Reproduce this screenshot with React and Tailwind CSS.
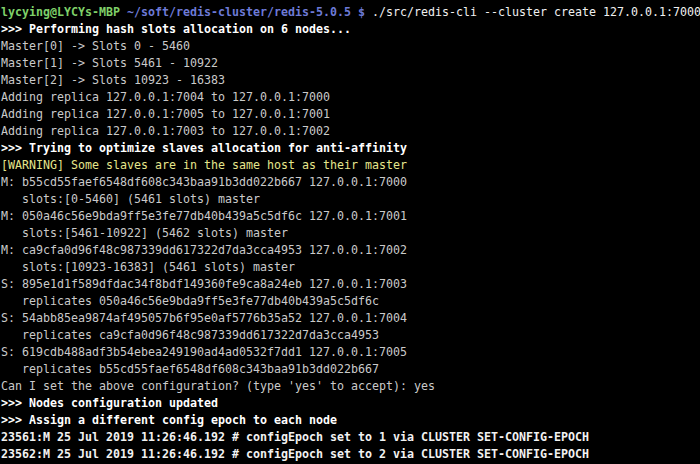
const lines = [
  { t: ">>> Performing hash slots allocation on 6 nodes...", c: "bold" },
  { t: "Master[0] -> Slots 0 - 5460" },
  { t: "Master[1] -> Slots 5461 - 10922" },
  { t: "Master[2] -> Slots 10923 - 16383" },
  { t: "Adding replica 127.0.0.1:7004 to 127.0.0.1:7000" },
  { t: "Adding replica 127.0.0.1:7005 to 127.0.0.1:7001" },
  { t: "Adding replica 127.0.0.1:7003 to 127.0.0.1:7002" },
  { t: ">>> Trying to optimize slaves allocation for anti-affinity", c: "bold" },
  { t: "[WARNING] Some slaves are in the same host as their master", c: "warn" },
  { t: "M: b55cd55faef6548df608c343baa91b3dd022b667 127.0.0.1:7000" },
  { t: "   slots:[0-5460] (5461 slots) master" },
  { t: "M: 050a46c56e9bda9ff5e3fe77db40b439a5c5df6c 127.0.0.1:7001" },
  { t: "   slots:[5461-10922] (5462 slots) master" },
  { t: "M: ca9cfa0d96f48c987339dd617322d7da3cca4953 127.0.0.1:7002" },
  { t: "   slots:[10923-16383] (5461 slots) master" },
  { t: "S: 895e1d1f589dfdac34f8bdf149360fe9ca8a24eb 127.0.0.1:7003" },
  { t: "   replicates 050a46c56e9bda9ff5e3fe77db40b439a5c5df6c" },
  { t: "S: 54abb85ea9874af495057b6f95e0af5776b35a52 127.0.0.1:7004" },
  { t: "   replicates ca9cfa0d96f48c987339dd617322d7da3cca4953" },
  { t: "S: 619cdb488adf3b54ebea249190ad4ad0532f7dd1 127.0.0.1:7005" },
  { t: "   replicates b55cd55faef6548df608c343baa91b3dd022b667" },
  { t: "Can I set the above configuration? (type 'yes' to accept): yes" },
  { t: ">>> Nodes configuration updated", c: "bold" },
  { t: ">>> Assign a different config epoch to each node", c: "bold" },
  { t: "23561:M 25 Jul 2019 11:26:46.192 # configEpoch set to 1 via CLUSTER SET-CONFIG-EPOCH", c: "bright" },
  { t: "23562:M 25 Jul 2019 11:26:46.192 # configEpoch set to 2 via CLUSTER SET-CONFIG-EPOCH", c: "bright" },
];

const styleFor = (c) => {
  if (c === "bold") return "text-white font-bold";
  if (c === "warn") return "text-[#e6e68c]";
  if (c === "bright") return "text-[#f2f2f2] font-semibold";
  return "text-[#cacaca]";
};

export default function App() {
  return (
    <div className="w-[700px] h-[464px] bg-black overflow-hidden pt-[4px] pl-px font-['DejaVu_Sans_Mono',monospace] text-[11.63px] leading-[17px] whitespace-pre">
      <div>
        <span className="text-[#7fd069] font-bold">lycying@LYCYs-MBP</span>
        <span className="text-[#cacaca]"> </span>
        <span className="text-[#6d7ad6] font-bold">~/soft/redis-cluster/redis-5.0.5 $</span>
        <span className="text-[#f0f0f0]"> ./src/redis-cli --cluster create 127.0.0.1:7000</span>
      </div>
      {lines.map((l, i) => (
        <div key={i} className={styleFor(l.c)}>
          {l.t}
        </div>
      ))}
    </div>
  );
}
